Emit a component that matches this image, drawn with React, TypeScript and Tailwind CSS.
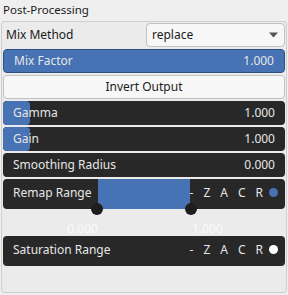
import React from "react";

const font = { fontFamily: '"Noto Sans", "Open Sans", sans-serif' };

function ValueRow({ label, value, fill }: { label: string; value: string; fill?: number }) {
  return (
    <div className="relative h-[24px] rounded-[4px] bg-[#282828] overflow-hidden">
      {fill !== undefined && (
        <div className="absolute left-0 top-0 h-full rounded-[4px] bg-[#4772b3]" style={{ width: fill }} />
      )}
      <div className="relative flex h-full items-center justify-between pl-[10px] pr-[10px] text-[12px] text-[#e6e6e6]">
        <span>{label}</span>
        <span>{value}</span>
      </div>
    </div>
  );
}

function Flags({ dot }: { dot: string }) {
  return (
    <div className="flex items-center gap-[10px] text-[12px] text-[#e6e6e6]">
      <span>-</span>
      <span>Z</span>
      <span>A</span>
      <span>C</span>
      <span>R</span>
      <span className={`-ml-[4px] h-[9px] w-[9px] rounded-full ${dot}`} />
    </div>
  );
}

export default function App() {
  return (
    <div className="h-[295px] w-[288px] bg-[#efefef] text-[#1a1a1a]" style={font}>
      <div className="h-[21px] pl-[3px] pt-[1px] text-[11.5px] leading-[18px]">Post-Processing</div>
      <div className="ml-[1px] h-[272px] w-[286px] rounded-[3px] border border-[#cfcfcf] bg-[#ebebeb] px-[1px] pt-[1px]">
        <div className="flex flex-col gap-[2px]">
          <div className="flex h-[24px] items-center justify-between">
            <span className="pl-[3px] text-[12px]">Mix Method</span>
            <div className="flex h-[24px] w-[139px] items-center justify-between rounded-[4px] border border-[#c2c2c2] bg-[#f7f7f7] pl-[5px] pr-[6px] text-[12px]">
              <span>replace</span>
              <svg width="9" height="6" viewBox="0 0 9 6">
                <path d="M0 0.5 L9 0.5 L4.5 5.5 Z" fill="#555" />
              </svg>
            </div>
          </div>
          <div className="flex h-[24px] items-center justify-between rounded-[4px] border border-[#2e4f82] bg-[#4772b3] px-[10px] text-[12px] text-[#e6e6e6]">
            <span>Mix Factor</span>
            <span>1.000</span>
          </div>
          <div className="flex h-[24px] items-center justify-center rounded-[4px] border border-[#c2c2c2] bg-[#f7f7f7] text-[12px]">
            Invert Output
          </div>
          <ValueRow label="Gamma" value="1.000" fill={27} />
          <ValueRow label="Gain" value="1.000" fill={27} />
          <ValueRow label="Smoothing Radius" value="0.000" />
          <div className="relative h-[55px]">
            <div className="relative h-[30px] rounded-[4px] bg-[#282828]">
              <div className="absolute left-[95px] top-0 h-full w-[92px] bg-[#4772b3]" />
              <div className="relative flex h-full items-center justify-between pb-[3px] pl-[10px] pr-[7px]">
                <span className="text-[12px] text-[#e6e6e6]">Remap Range</span>
                <Flags dot="bg-[#4772b3]" />
              </div>
            </div>
            <div className="absolute left-[88px] top-[24px] h-[12px] w-[12px] rounded-full bg-[#1e1e1e]" />
            <div className="absolute left-[182px] top-[24px] h-[12px] w-[12px] rounded-full bg-[#1e1e1e]" />
            <div className="absolute left-[64px] top-[43px] text-[12px] leading-[14px] text-[#fafafa]">0.000</div>
            <div className="absolute left-[189px] top-[43px] text-[12px] leading-[14px] text-[#fafafa]">1.000</div>
          </div>
          <div className="flex h-[30px] items-center justify-between rounded-[4px] bg-[#282828] pb-[3px] pl-[10px] pr-[7px]">
            <span className="text-[12px] text-[#e6e6e6]">Saturation Range</span>
            <Flags dot="bg-white" />
          </div>
        </div>
      </div>
    </div>
  );
}
